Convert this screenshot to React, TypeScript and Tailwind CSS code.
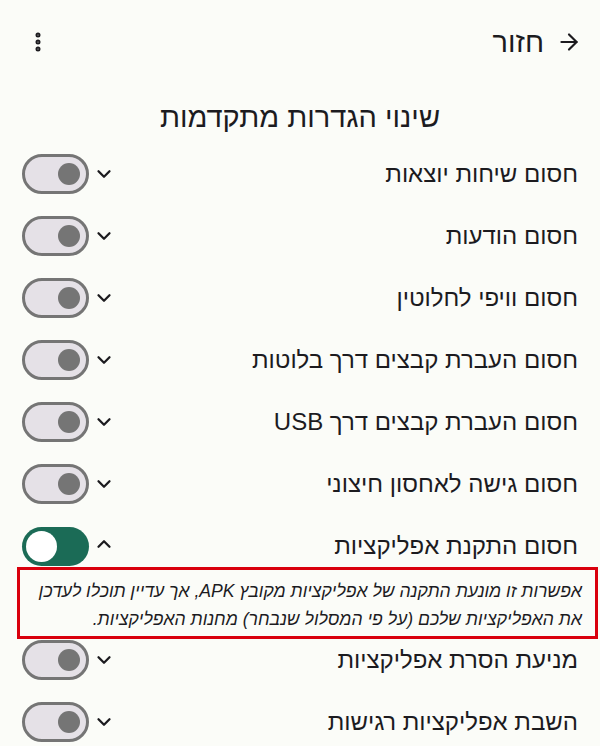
import { ArrowRight, EllipsisVertical, ChevronDown, ChevronUp } from "lucide-react";

const rows = [
  { label: "חסום שיחות יוצאות", on: false },
  { label: "חסום הודעות", on: false },
  { label: "חסום וויפי לחלוטין", on: false },
  { label: "חסום העברת קבצים דרך בלוטות", on: false },
  { label: "חסום העברת קבצים דרך USB", on: false },
  { label: "חסום גישה לאחסון חיצוני", on: false },
  { label: "חסום התקנת אפליקציות", on: true },
  { label: "מניעת הסרת אפליקציות", on: false },
  { label: "השבת אפליקציות רגישות", on: false },
];

const Toggle = ({ on }: { on: boolean }) =>
  on ? (
    <div className="w-[67px] h-[39px] rounded-full bg-[#1b6b56] flex items-center justify-start pl-[4px]" dir="ltr">
      <div className="w-[31px] h-[31px] rounded-full bg-white" />
    </div>
  ) : (
    <div className="w-[67px] h-[40px] rounded-full bg-[#e5e1e7] border-[3px] border-[#757575] flex items-center justify-end pr-[6px]" dir="ltr">
      <div className="w-[22px] h-[22px] rounded-full bg-[#757575]" />
    </div>
  );

export default function App() {
  return (
    <div
      dir="rtl"
      className="w-[600px] h-[746px] overflow-hidden bg-[#fbfcf8] text-[#1c1b1f]"
      style={{ fontFamily: '"Liberation Sans", "Noto Sans", sans-serif' }}
    >
      <div className="flex items-center justify-between h-[84px] pr-[18px] pl-[26px]">
        <div className="flex items-center gap-[12px]">
          <ArrowRight size={26} strokeWidth={2} />
          <span className="text-[29px] leading-none">חזור</span>
        </div>
        <EllipsisVertical size={24} strokeWidth={3} />
      </div>
      <h1 className="text-center text-[29px] leading-[34px] mt-[16px] mb-[9px]">שינוי הגדרות מתקדמות</h1>
      <div className="flex flex-col">
        {rows.map((r) => (
          <div key={r.label}>
            <div className="flex items-center justify-between h-[62px] pr-[22px] pl-[22px]">
              <span className="text-[24px] leading-none">{r.label}</span>
              <div className="flex items-center gap-[4px]">
                {r.on ? (
                  <ChevronUp size={22} strokeWidth={2.5} className="mt-[-4px]" />
                ) : (
                  <ChevronDown size={22} strokeWidth={2.5} />
                )}
                <Toggle on={r.on} />
              </div>
            </div>
            {r.on && (
              <div className="mr-[2px] ml-[17px] -mt-[10px] border-[3px] border-[#d9000d] pr-[13px] pl-0 pt-[7px] pb-[3px] mb-[-10px]">
                <p className="italic text-[17.6px] leading-[28px] text-[#1c1b1f]">
                  אפשרות זו מונעת התקנה של אפליקציות מקובץ APK, אך עדיין תוכלו לעדכן את האפליקציות שלכם (על פי המסלול שנבחר) מחנות האפליקציות.
                </p>
              </div>
            )}
          </div>
        ))}
      </div>
    </div>
  );
}
